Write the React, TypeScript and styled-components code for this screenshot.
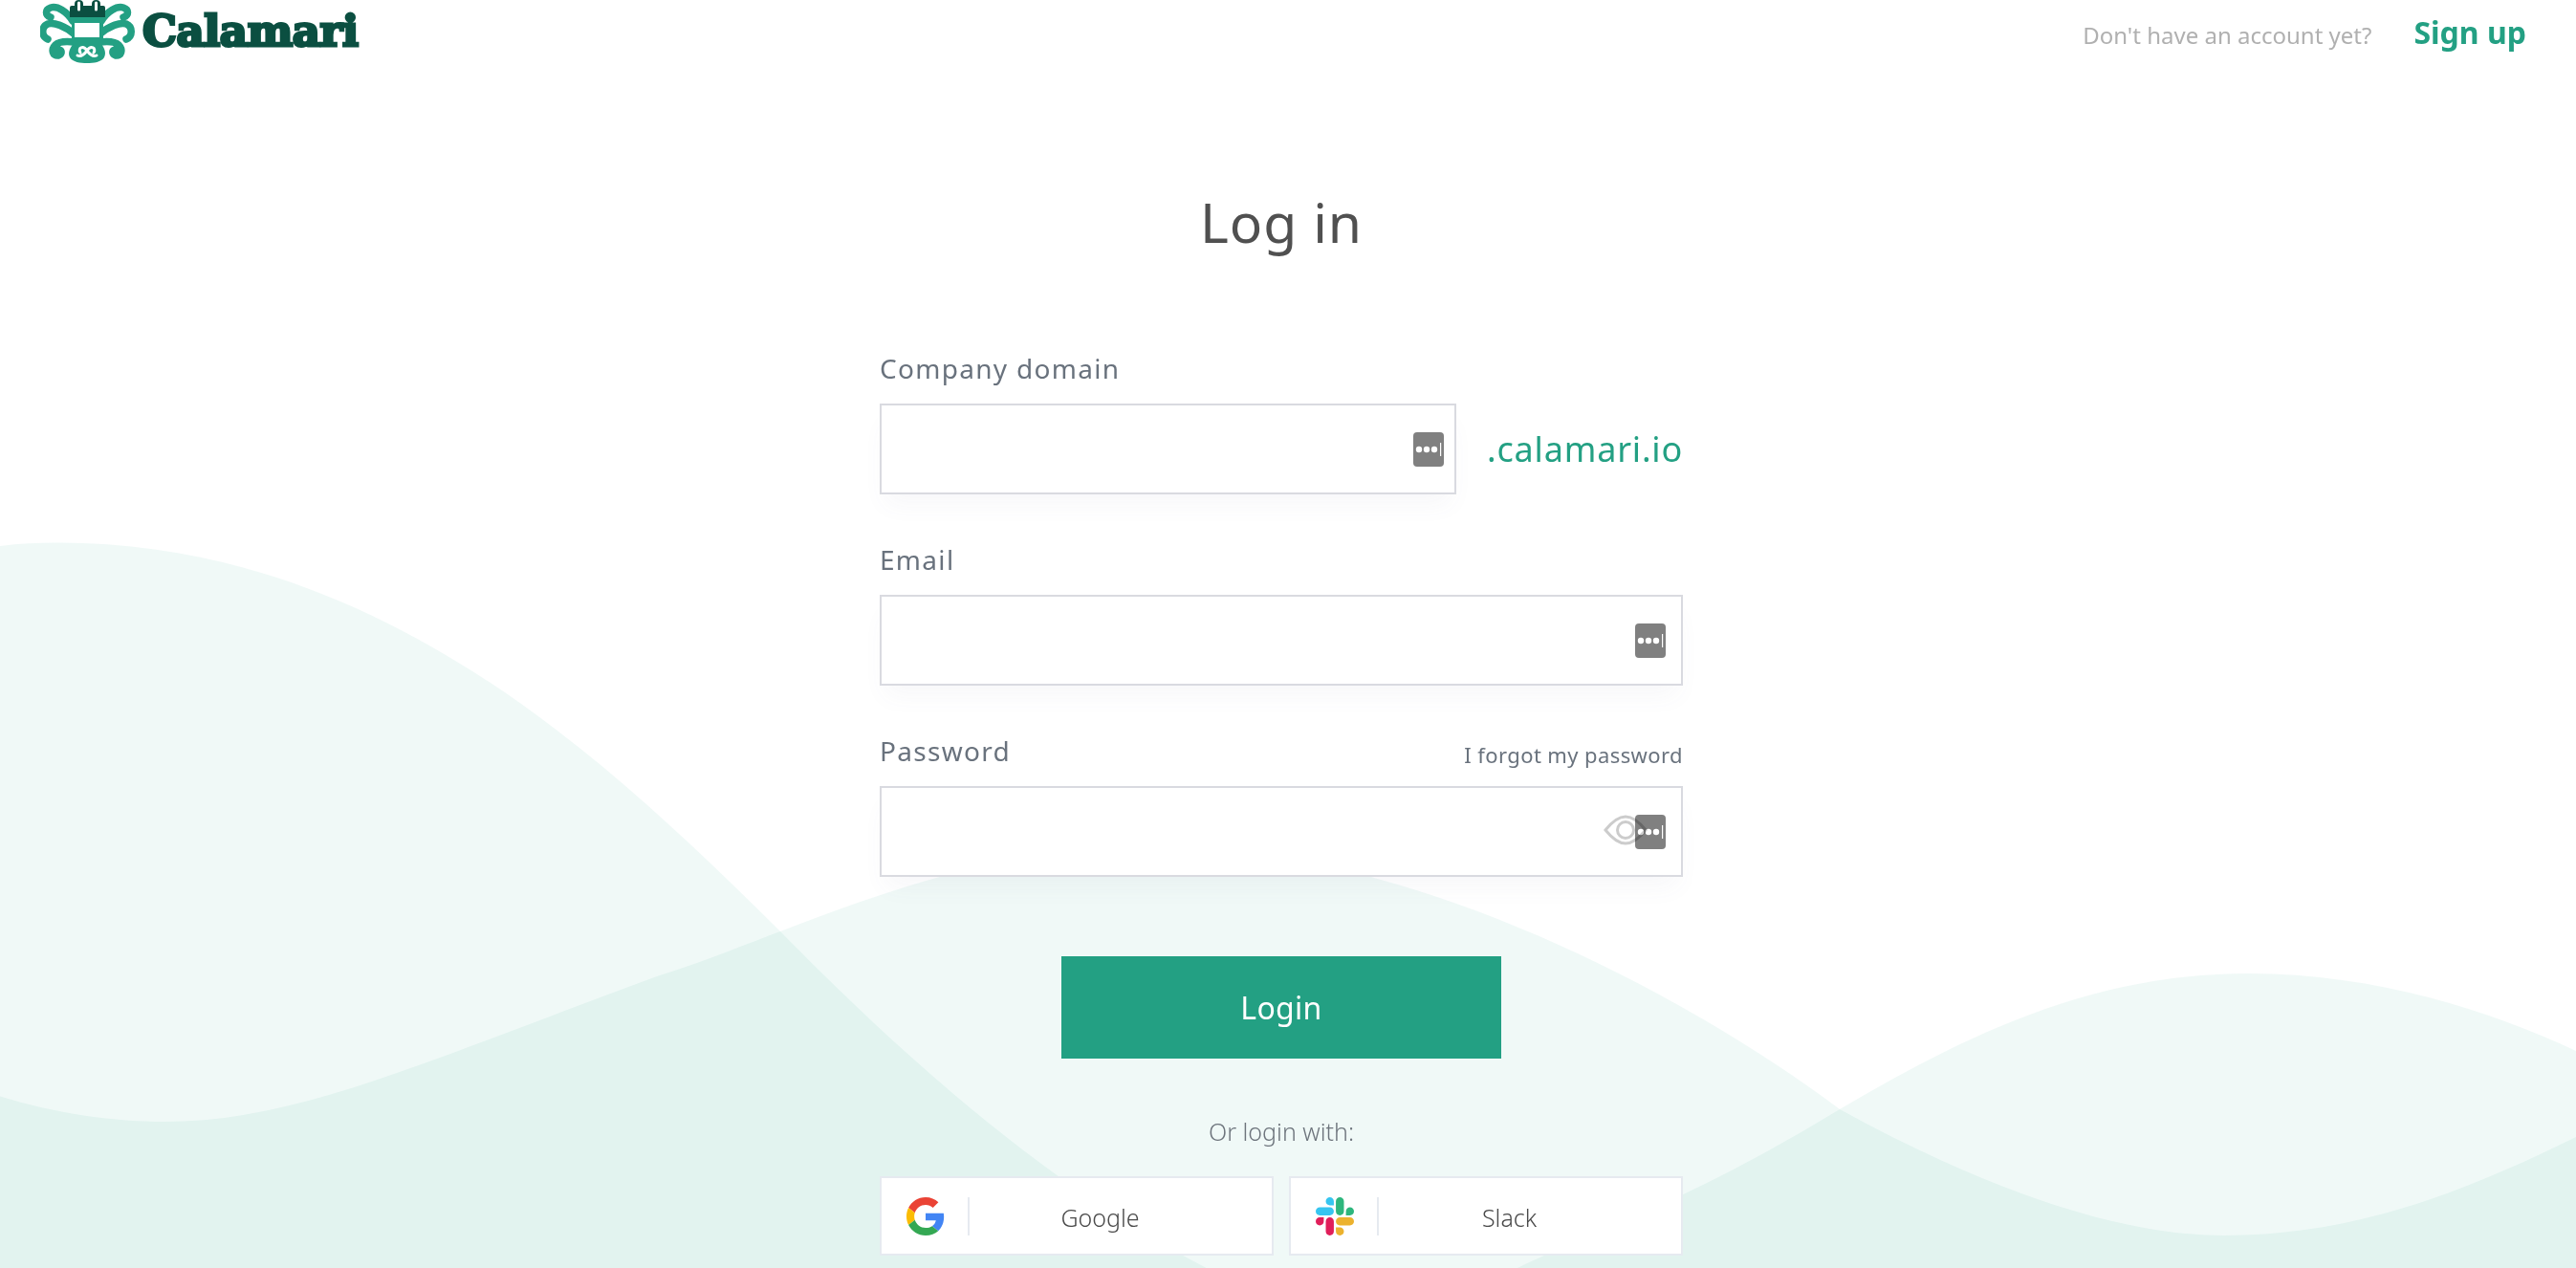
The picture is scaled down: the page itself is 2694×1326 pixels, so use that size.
import React from "react";
import styled, { createGlobalStyle } from "styled-components";

const Global = createGlobalStyle`
  html, body { margin: 0; padding: 0; height: 100%; background: #fff; overflow: hidden; }
  * { box-sizing: border-box; }
  body { font-family: "Noto Sans", "Open Sans", sans-serif; }
`;

const Page = styled.div`
  position: relative;
  height: 1326px;
  overflow: hidden;
  padding-right: 14px;
`;
const Waves = styled.svg`
  position: absolute;
  inset: 0;
  width: 2694px;
  height: 1326px;
`;
const Wave = styled.path`
  fill: rgb(30, 160, 130);
  fill-opacity: 0.065;
`;
const Content = styled.div`
  position: relative;
  display: flex;
  flex-direction: column;
`;
const Header = styled.header`
  display: flex;
  align-items: flex-start;
  justify-content: space-between;
  height: 66px;
  padding: 0 38px 0 42px;
`;
const Brand = styled.div`
  display: flex;
  align-items: flex-start;
  gap: 6px;
`;
const BrandName = styled.span`
  font-family: "DejaVu Serif", serif;
  font-weight: 700;
  font-size: 45px;
  line-height: 66px;
  letter-spacing: -0.4px;
  color: #0b4f41;
  -webkit-text-stroke: 3px #0b4f41;
`;
const HeaderRight = styled.div`
  display: flex;
  align-items: center;
  gap: 44px;
  height: 72px;
`;
const Muted = styled.span`
  font-size: 24px;
  color: #b0b0b0;
`;
const SignUp = styled.a`
  font-size: 32px;
  font-weight: 700;
  color: #23a083;
  margin-top: -5px;
`;
const Title = styled.h1`
  margin: 125px 0 0;
  height: 82px;
  font-size: 57px;
  line-height: 82px;
  font-weight: 400;
  letter-spacing: 1px;
  color: #505050;
  text-align: center;
`;
const Form = styled.form`
  width: 840px;
  margin: 80px auto 0;
  display: flex;
  flex-direction: column;
`;
const Field = styled.div`
  display: flex;
  flex-direction: column;
  height: 200px;
`;
const LabelRow = styled.div`
  display: flex;
  align-items: flex-end;
  justify-content: space-between;
  height: 69px;
  padding-bottom: 18px;
`;
const Label = styled.label`
  font-size: 28px;
  line-height: 38px;
  letter-spacing: 1.3px;
  color: #69727d;
`;
const Forgot = styled.a`
  font-size: 22px;
  line-height: 32px;
  letter-spacing: 0.4px;
  color: #69727d;
  margin-bottom: -1px;
`;
const InputRow = styled.div`
  display: flex;
  align-items: center;
  justify-content: space-between;
`;
const InputWrap = styled.div<{ $width: number }>`
  position: relative;
  width: ${(p) => p.$width}px;
  height: 95px;
  background: #fff;
  border: 2px solid #d9dae0;
  box-shadow: 0 16px 24px -6px rgba(90, 100, 140, 0.05);
`;
const Input = styled.input`
  width: 100%;
  height: 100%;
  border: 0;
  outline: 0;
  background: transparent;
`;
const KeyBox = styled.span<{ $inset: number }>`
  position: absolute;
  right: ${(p) => p.$inset}px;
  top: 28px;
  width: 32px;
  height: 36px;
  border-radius: 4px;
  background: #808080;
  mix-blend-mode: multiply;
  display: flex;
  align-items: center;
`;
const EyeIcon = styled.svg`
  position: absolute;
  right: 35px;
  top: 28px;
`;
const Suffix = styled.span`
  font-size: 36px;
  letter-spacing: 0.8px;
  color: #23a083;
`;
const Submit = styled.button`
  display: block;
  align-self: center;
  width: 460px;
  height: 107px;
  margin-top: 47px;
  border: 0;
  background: #23a083;
  color: #fff;
  font-family: inherit;
  font-size: 32px;
  letter-spacing: 0.3px;
`;
const OrText = styled.div`
  margin-top: 57px;
  height: 38px;
  line-height: 38px;
  text-align: center;
  font-size: 25px;
  font-weight: 300;
  color: #6d747c;
`;
const Socials = styled.div`
  margin-top: 28px;
  display: grid;
  grid-template-columns: 412px 412px;
  justify-content: space-between;
`;
const SocialButton = styled.button`
  display: flex;
  align-items: center;
  height: 83px;
  padding: 0 0 0 26px;
  background: #fff;
  border: 2px solid #e6eaf0;
  font-family: inherit;
`;
const SocialIcon = styled.svg`
  flex: none;
  width: 40px;
  height: 40px;
`;
const Divider = styled.span`
  flex: none;
  width: 2px;
  height: 40px;
  margin-left: 24px;
  background: #e6eaf0;
`;
const SocialName = styled.span`
  flex: 1;
  padding: 2px 43px 0 0;
  text-align: center;
  font-size: 25px;
  font-weight: 300;
  color: #4a4a4a;
`;

const waveA =
  "M0 571 C20 568.5 40 567.6 60 567.6 C400 567 640 800 816 974 C930 1090 1100 1250 1290 1340 L0 1340Z";
const waveB =
  "M0 1146.5 C60 1165 120 1173 172 1173 C310 1173 440 1112 687 1021 C820 980 980 890 1210 880 C1300 880 1380 895 1437 918 C1610 965 1790 1060 1924 1160 C2070 1240 2210 1292 2326 1292 C2470 1292 2590 1240 2694 1189 L2694 1326 L0 1326Z";
const waveC =
  "M1587 1326 C1660 1290 1760 1260 1924 1160 C2060 1080 2190 1018 2352 1018 C2480 1018 2600 1055 2694 1099 L2694 1326Z";

const Logo = () => (
  <svg width="101" height="66" viewBox="0 0 101 66" aria-hidden="true">
    <g transform="translate(-42 0)">
      {[false, true].map((mirror) => (
        <g key={String(mirror)} transform={mirror ? "translate(182 0) scale(-1 1)" : undefined}>
          <g fill="none" stroke="#23a083" strokeWidth="7.5" strokeLinecap="round">
            <path d="M76 22 C70 12 60 6 53 8 C47 10 47 16 53 18" />
            <path d="M78 36 C68 27 56 23 50 25 C43 28 43 38 50 41" />
            <path d="M78 44 C70 43 62 43 58 47 C53 52 55 59 61 58 C65 57 65 53 62 52" />
          </g>
          <path d="M49 33 H56 M52.5 30 V36" fill="none" stroke="#fff" strokeWidth="2.5" />
        </g>
      ))}
      <path d="M79 42 H103 C108 48 112 54 109 60 C106 65 98 66 91 66 C84 66 76 65 73 60 C70 54 75 48 79 42Z" fill="#23a083" />
      <path d="M91 53 C87 47 81 50 84 55 M91 53 C95 47 101 50 98 55 M91 53 C88 57 85 60 81 58 M91 53 C94 57 97 60 101 58" fill="none" stroke="#fff" strokeWidth="3" strokeLinecap="round" />
      <path d="M75 18 H108 V46 H75Z" fill="#23a083" />
      <path d="M78 24 H104 V39 H78Z" fill="#fff" />
      <path d="M73 18 V8 Q73 6 75 6 H78 V4 Q78 0 82.5 0 Q87 0 87 4 V6 H96 V4 Q96 0 100.5 0 Q105 0 105 4 V6 H108 Q110 6 110 8 V18Z" fill="#0b4f41" />
      <path d="M82.5 3 V10 M100.5 3 V10" stroke="#fff" strokeWidth="3" strokeLinecap="round" />
    </g>
  </svg>
);

const KeyDots = () => (
  <svg width="32" height="36" viewBox="0 0 32 36" aria-hidden="true">
    <circle cx="6" cy="18" r="3.2" fill="#fff" />
    <circle cx="14" cy="18" r="3.2" fill="#fff" />
    <circle cx="22" cy="18" r="3.2" fill="#fff" />
    <rect x="28" y="11" width="1.2" height="14" fill="#fff" />
  </svg>
);

const Eye = () => (
  <EyeIcon width="46" height="32" viewBox="0 0 46 32" fill="none" stroke="#cccccc" strokeWidth="3" aria-hidden="true">
    <path d="M2 16 C10 6 17 2 23 2 C29 2 36 6 44 16 C36 26 29 30 23 30 C17 30 10 26 2 16Z" />
    <circle cx="23" cy="16" r="8.5" />
  </EyeIcon>
);

const GoogleIcon = () => (
  <SocialIcon viewBox="0 0 48 48" aria-hidden="true">
    <path fill="#EA4335" d="M24 9.5c3.54 0 6.71 1.22 9.21 3.6l6.85-6.85C35.9 2.38 30.47 0 24 0 14.62 0 6.51 5.38 2.56 13.22l7.98 6.19C12.43 13.72 17.74 9.5 24 9.5z" />
    <path fill="#4285F4" d="M46.98 24.55c0-1.57-.15-3.09-.38-4.55H24v9.02h12.94c-.58 2.96-2.26 5.48-4.78 7.18l7.73 6c4.51-4.18 7.09-10.36 7.09-17.65z" />
    <path fill="#FBBC05" d="M10.53 28.59c-.48-1.45-.76-2.99-.76-4.59s.27-3.14.76-4.59l-7.98-6.19C.92 16.46 0 20.12 0 24c0 3.88.92 7.54 2.56 10.78l7.97-6.19z" />
    <path fill="#34A853" d="M24 48c6.48 0 11.93-2.13 15.89-5.81l-7.73-6c-2.15 1.45-4.92 2.3-8.16 2.3-6.26 0-11.57-4.22-13.47-9.91l-7.98 6.19C6.51 42.62 14.62 48 24 48z" />
  </SocialIcon>
);

const SlackIcon = () => (
  <SocialIcon viewBox="0 0 122.8 122.8" aria-hidden="true">
    <path fill="#e01e5a" d="M25.8 77.6c0 7.1-5.8 12.9-12.9 12.9S0 84.7 0 77.6s5.8-12.9 12.9-12.9h12.9v12.9zm6.5 0c0-7.1 5.8-12.9 12.9-12.9s12.9 5.8 12.9 12.9v32.3c0 7.1-5.8 12.9-12.9 12.9s-12.9-5.8-12.9-12.9V77.6z" />
    <path fill="#36c5f0" d="M45.2 25.8c-7.1 0-12.9-5.8-12.9-12.9S38.1 0 45.2 0s12.9 5.8 12.9 12.9v12.9H45.2zm0 6.5c7.1 0 12.9 5.8 12.9 12.9s-5.8 12.9-12.9 12.9H12.9C5.8 58.1 0 52.3 0 45.2s5.8-12.9 12.9-12.9h32.3z" />
    <path fill="#2eb67d" d="M97 45.2c0-7.1 5.8-12.9 12.9-12.9s12.9 5.8 12.9 12.9-5.8 12.9-12.9 12.9H97V45.2zm-6.5 0c0 7.1-5.8 12.9-12.9 12.9s-12.9-5.8-12.9-12.9V12.9C64.7 5.8 70.5 0 77.6 0s12.9 5.8 12.9 12.9v32.3z" />
    <path fill="#ecb22e" d="M77.6 97c7.1 0 12.9 5.8 12.9 12.9s-5.8 12.9-12.9 12.9-12.9-5.8-12.9-12.9V97h12.9zm0-6.5c-7.1 0-12.9-5.8-12.9-12.9s5.8-12.9 12.9-12.9h32.3c7.1 0 12.9 5.8 12.9 12.9s-5.8 12.9-12.9 12.9H77.6z" />
  </SocialIcon>
);

const KeyButton = ({ inset }: { inset: number }) => (
  <KeyBox $inset={inset}>
    <KeyDots />
  </KeyBox>
);

export default function App() {
  return (
    <Page>
      <Global />
      <Waves viewBox="0 0 2694 1326" aria-hidden="true">
        <Wave d={waveA} />
        <Wave d={waveB} />
        <Wave d={waveC} />
      </Waves>
      <Content>
        <Header>
          <Brand>
            <Logo />
            <BrandName>Calamari</BrandName>
          </Brand>
          <HeaderRight>
            <Muted>Don't have an account yet?</Muted>
            <SignUp>Sign up</SignUp>
          </HeaderRight>
        </Header>
        <Title>Log in</Title>
        <Form>
          <Field>
            <LabelRow>
              <Label>Company domain</Label>
            </LabelRow>
            <InputRow>
              <InputWrap $width={603}>
                <Input />
                <KeyButton inset={11} />
              </InputWrap>
              <Suffix>.calamari.io</Suffix>
            </InputRow>
          </Field>
          <Field>
            <LabelRow>
              <Label>Email</Label>
            </LabelRow>
            <InputRow>
              <InputWrap $width={840}>
                <Input />
                <KeyButton inset={16} />
              </InputWrap>
            </InputRow>
          </Field>
          <Field>
            <LabelRow>
              <Label>Password</Label>
              <Forgot>I forgot my password</Forgot>
            </LabelRow>
            <InputRow>
              <InputWrap $width={840}>
                <Input type="password" />
                <Eye />
                <KeyButton inset={16} />
              </InputWrap>
            </InputRow>
          </Field>
          <Submit type="button">Login</Submit>
          <OrText>Or login with:</OrText>
          <Socials>
            <SocialButton type="button">
              <GoogleIcon />
              <Divider />
              <SocialName>Google</SocialName>
            </SocialButton>
            <SocialButton type="button">
              <SlackIcon />
              <Divider />
              <SocialName>Slack</SocialName>
            </SocialButton>
          </Socials>
        </Form>
      </Content>
    </Page>
  );
}
